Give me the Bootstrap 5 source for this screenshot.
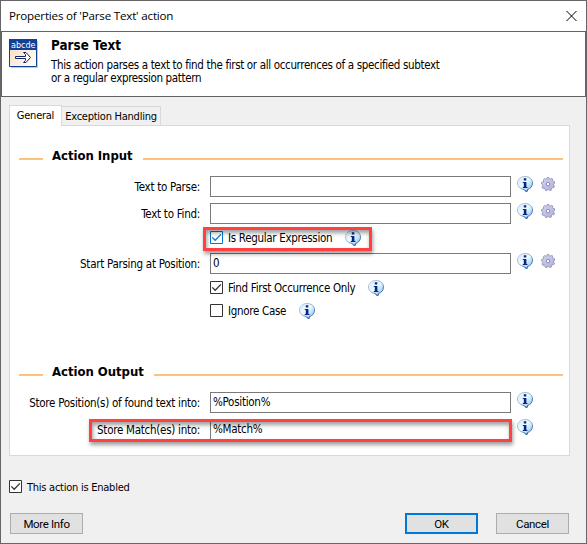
<!DOCTYPE html>
<html lang="en">
<head>
<meta charset="utf-8">
<meta name="viewport" content="width=device-width, initial-scale=1">
<title>Properties of 'Parse Text' action</title>
<link href="https://cdn.jsdelivr.net/npm/bootstrap@5.3.0/dist/css/bootstrap.min.css" rel="stylesheet">
<style>
body{width:587px;height:544px;overflow:hidden;background:#f0f0f0;color:#000;font:11.5px/13px "DejaVu Sans Condensed","DejaVu Sans",sans-serif;font-stretch:condensed;letter-spacing:-.27px}
.dialog{width:587px;height:544px;border:1px solid #666;background:#f0f0f0}
.titlebar{height:30px;padding:0 9px 0 8px;font:11.6px/16px "Open Sans",sans-serif;letter-spacing:-.19px}
.intro{height:66px;border:1px solid #636363;padding:7px 0 0 7px}
.intro h1,.section h2{font-size:13px;line-height:16px;font-weight:700;margin:0;letter-spacing:-.03px}
.intro h1{font-size:13.3px;margin-top:-1px;letter-spacing:.04px}
.head-copy{margin-left:13px}
.intro p{margin:5px 0 0;line-height:13px;letter-spacing:-.34px}
.dialog-tabs{margin:8px 0 0 8px;height:20px;font-size:11px;letter-spacing:-.25px}
.dialog-tabs .nav-link{color:#000;border:1px solid #d9d9d9;border-radius:0;padding:0;text-align:center;background:#f0f0f0}
.dialog-tabs .general{width:53px;height:21px;line-height:19px;background:#fff;border-bottom:0;position:relative;z-index:1}
.dialog-tabs .exceptions{width:99px;height:19px;line-height:20px;border-left:0;border-bottom:0}
.panel{width:561px;height:331px;margin-left:8px;background:#fff;border:1px solid #d9d9d9;padding:22px 6px 0 9px}
.section{height:16px}
.rule{height:2px;background:#ffc080;margin-top:6px}
.rule-a{width:24px;margin-right:9px}
.rule-b{margin-left:10px}
.fields{padding-top:12px}
.output-section{margin-top:44px}
.line{height:21px;margin-bottom:6px}
.line>label{width:181px;text-align:right;margin-right:10px;padding-top:5px}
.box{width:301px;height:21px;border:1px solid #7a7a7a;border-radius:0;padding:0 0 1px 2px;font:inherit;letter-spacing:inherit;color:#000;background:#fff}
.info{width:17px;height:17px;margin-left:6px;flex:none}
.gear{width:14px;height:14px;margin:1px 0 0 7px;flex:none}
.tick{height:17px;margin:0 0 6px 191px;letter-spacing:-.31px}
.tick .info{margin-left:13px}
.cb{width:13px;height:13px;flex:none;margin:-2px 5px 0 0}
.callout{position:absolute;border:3px solid #ff4141;box-shadow:1px 3px 4px rgba(0,0,0,.38),inset 1px 3px 4px rgba(0,0,0,.38);z-index:3;pointer-events:none}
.c1{left:203px;top:227px;width:169px;height:24px}
.c2{left:89px;top:419px;width:423px;height:23px}
.enabled{height:13px;margin:24px 0 0 8px;font-size:11px;letter-spacing:-.25px}
.enabled .cb{margin-top:0}
.enabled span{padding-top:1px}
.actions{margin:20px 17px 0 9px}
.dbtn{width:73px;height:21px;border:1px solid #adadad;border-radius:0;background:#e1e1e1;color:#000;padding:0;font:11.5px/18px Roboto,sans-serif;letter-spacing:-.35px}
.dbtn.ok{border:2px solid #0078d7;line-height:16px}
.dbtn.cancel{margin-left:18px}
</style>
</head>
<body>
<svg width="0" height="0" class="position-absolute">
<defs>
<linearGradient id="bub" x1="0" y1="0" x2="1" y2="1"><stop offset="0" stop-color="#d3e4f8"/><stop offset=".45" stop-color="#effcff"/><stop offset=".7" stop-color="#b5defb"/><stop offset="1" stop-color="#5f92d6"/></linearGradient>
<linearGradient id="rim" x1="0" y1="0" x2="1" y2="1"><stop offset="0" stop-color="#c9d6e6"/><stop offset=".5" stop-color="#7fa3cb"/><stop offset="1" stop-color="#244f92"/></linearGradient>
<linearGradient id="gr" x1="0" y1="0" x2="1" y2="1"><stop offset="0" stop-color="#d6d6f0"/><stop offset="1" stop-color="#aeadd6"/></linearGradient>
<linearGradient id="sand" x1="0" y1="0" x2="1" y2="1"><stop offset="0" stop-color="#f6d9b8"/><stop offset="1" stop-color="#fff"/></linearGradient>
<symbol id="info" viewBox="0 0 17 17">
<path d="M8 .5C12.200.5 15.500 3.200 15.500 7C15.500 10.400 13.300 12.800 10.700 13.400L9.600 16L7 13.400C3.200 13 .5 10.400.5 7C.5 3.200 3.700.5 8 .5Z" fill="url(#bub)" stroke="url(#rim)"/>
<path d="M7 13.400L9.600 16L10.700 13.400" fill="none" stroke="#3a6aa8"/>
<path d="M6.800 2.300h2.500v2.300H6.800zM5.800 5.900h3.600v5h1v1.200H5.800v-1.200h1V7H5.800z" fill="#07277f"/>
</symbol>
<symbol id="gear" viewBox="0 0 14 14">
<path d="M5.700 1.900L6.100.5h1.800l.4 1.400 1.100.3 1-1 1.500 1-.4 1.400.7.800 1.300.2.300 1.700-1.300.8v1l1 1-.7 1.600-1.400-.1-.8.800.1 1.400-1.600.8-1.100-1H6.800l-.9 1.100-1.700-.5-.1-1.400-.9-.7-1.400.3-.9-1.500.9-1.100-.2-1L.4 6.900l.4-1.700 1.400-.2.600-.9-.5-1.300 1.400-1.200 1.200.7z" fill="url(#gr)" stroke="#8988b9" stroke-width=".8"/>
<circle cx="7" cy="7.100" r="1.700" fill="#fff" stroke="#8281b4" stroke-width=".9"/>
</symbol>
<symbol id="on" viewBox="0 0 13 13"><path d="M.5.5h12v12H.5z" fill="#fff" stroke="currentColor"/><path d="M2.300 6.400l2.900 2.900 5.700-5.900" fill="none" stroke="currentColor" stroke-width="1.300"/></symbol>
<symbol id="off" viewBox="0 0 13 13"><path d="M.5.5h12v12H.5z" fill="#fff" stroke="currentColor"/></symbol>
</defs>
</svg>
<main class="dialog position-relative">
<header class="titlebar bg-white d-flex justify-content-between align-items-center">
<span>Properties of 'Parse Text' action</span>
<svg width="11" height="11" viewBox="0 0 11 11"><path d="M.5 0l10 10m0-10l-10 10" stroke="#000" fill="none"/></svg>
</header>
<section class="intro bg-white d-flex">
<svg class="flex-shrink-0" width="29" height="29" viewBox="0 0 29 29">
<path d="M2 28.500h26.500V2" fill="none" stroke="#c8c8c8"/>
<path d="M.5.500h27v27H.5z" fill="url(#sand)" stroke="#124096"/>
<path d="M0 0h28v11H0z" fill="#124096"/>
<text x="2" y="9" textLength="24.500" lengthAdjust="spacingAndGlyphs" font-family="DejaVu Sans" font-size="8.500" fill="#fff" letter-spacing="0">abcde</text>
<path d="M6.500 17.500h10v-2l-2-2h2.500l4.500 5-4.500 5h-2.500l2-2v-2h-10z" fill="#fff" stroke="#14246f"/>
</svg>
<div class="head-copy"><h1>Parse Text</h1><p>This action parses a text to find the first or all occurrences of a specified subtext<br>or a regular expression pattern</p></div>
</section>
<nav class="nav dialog-tabs align-items-end flex-nowrap">
<a class="nav-link general align-self-start">General</a><a class="nav-link exceptions">Exception Handling</a>
</nav>
<section class="panel">
<div class="section d-flex align-items-center"><span class="rule rule-a"></span><h2>Action Input</h2><span class="rule rule-b flex-grow-1"></span></div>
<div class="fields">
<div class="line d-flex"><label>Text to Parse:</label><input class="box"><svg class="info"><use href="#info"/></svg><svg class="gear"><use href="#gear"/></svg></div>
<div class="line d-flex"><label>Text to Find:</label><input class="box"><svg class="info"><use href="#info"/></svg><svg class="gear"><use href="#gear"/></svg></div>
<div class="tick d-flex align-items-center"><svg class="cb" color="#0078d7"><use href="#on"/></svg><span>Is Regular Expression</span><svg class="info"><use href="#info"/></svg></div>
<div class="line d-flex"><label>Start Parsing at Position:</label><input class="box" value="0"><svg class="info"><use href="#info"/></svg><svg class="gear"><use href="#gear"/></svg></div>
<div class="tick d-flex align-items-center"><svg class="cb" color="#333"><use href="#on"/></svg><span>Find First Occurrence Only</span><svg class="info"><use href="#info"/></svg></div>
<div class="tick d-flex align-items-center"><svg class="cb" color="#333"><use href="#off"/></svg><span>Ignore Case</span><svg class="info"><use href="#info"/></svg></div>
</div>
<div class="section output-section d-flex align-items-center"><span class="rule rule-a"></span><h2>Action Output</h2><span class="rule rule-b flex-grow-1"></span></div>
<div class="fields">
<div class="line d-flex"><label>Store Position(s) of found text into:</label><input class="box" value="%Position%"><svg class="info"><use href="#info"/></svg></div>
<div class="line d-flex"><label>Store Match(es) into:</label><input class="box" value="%Match%"><svg class="info"><use href="#info"/></svg></div>
</div>
</section>
<div class="enabled d-flex align-items-center"><svg class="cb" color="#333"><use href="#on"/></svg><span>This action is Enabled</span></div>
<footer class="actions d-flex"><button class="btn dbtn">More Info</button><button class="btn dbtn ok ms-auto">OK</button><button class="btn dbtn cancel">Cancel</button></footer>
</main>
<div class="callout c1"></div><div class="callout c2"></div>
<script src="https://cdn.jsdelivr.net/npm/bootstrap@5.3.0/dist/js/bootstrap.bundle.min.js"></script>
</body>
</html>
